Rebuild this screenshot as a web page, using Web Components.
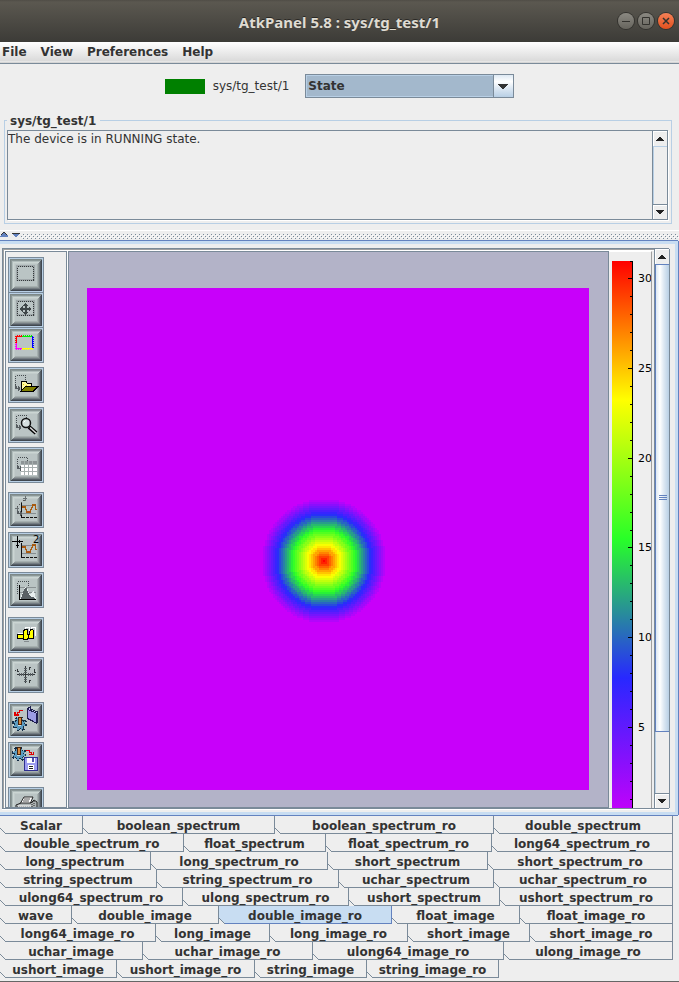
<!DOCTYPE html>
<html lang="en">
<head>
<meta charset="utf-8">
<title>AtkPanel 5.8 : sys/tg_test/1</title>
<style>
html, body { margin: 0; height: 100%; background: #eee; }
body {
  --line: #7a8a99; --focus: #6382bf; --pale: #b8cfe5; --tab: #c8ddf2; --ink: #333;
  font: 12px/16px "DejaVu Sans", sans-serif; color: var(--ink);
}
</style>
</head>
<body>
<atk-panel></atk-panel>
<script>
const define = (name, html, setup) => {
  const template = document.createElement('template');
  template.innerHTML = html;
  customElements.define(name, class extends HTMLElement {
    constructor() {
      super();
      this.attachShadow({ mode: 'open' }).append(template.content.cloneNode(true));
    }
    connectedCallback() {
      if (setup && !this.ready) { this.ready = true; setup(this.shadowRoot, this); }
    }
  });
};

define('title-bar', `
<style>
:host { display: grid; grid-template-columns: 1fr auto 1fr; align-items: center; height: 42px; box-sizing: border-box;
  background: linear-gradient(#504d46, #5b5850 2px, #3c3b37); color: #dfdbd2; }
h1 { grid-column: 2; margin: 0; padding-top: 2px; font: 700 15px/20px "Noto Sans", "Open Sans", sans-serif; text-shadow: 0 -1px #2a2926; }
div { display: flex; justify-content: flex-end; gap: 4px; padding-right: 5px; }
button { width: 16px; height: 16px; padding: 0; border: 0; border-radius: 50%; background: linear-gradient(#8b8982, #66645d); box-shadow: 0 0 0 1px #33322e; display: grid; }
button:last-child { background: linear-gradient(#f58157, #e2501d); }
svg { width: 16px; height: 16px; fill: none; stroke: #33322e; }
</style>
<h1><slot></slot></h1>
<div>
<button aria-label="Minimize"><svg viewBox="0 0 16 16"><path d="M4 8.500h8"/></svg></button>
<button aria-label="Maximize"><svg viewBox="0 0 16 16"><path d="M4.500 4.500h7v7h-7z"/></svg></button>
<button aria-label="Close"><svg viewBox="0 0 16 16"><path d="M5 5l6 6M11 5l-6 6" stroke-width="1.500"/></svg></button>
</div>`);

define('menu-bar', `
<style>
:host { display: flex; gap: 14px; padding: 0 2px; height: 22px; box-sizing: border-box; border-bottom: 1px solid var(--line);
  background: linear-gradient(#fff, #dadada 19px, #eee 19px, #ccc); }
button { border: 0; padding: 0; background: none; color: inherit; font: bold 12px/20px "DejaVu Sans", sans-serif; height: 20px; }
</style>
<button>File</button><button>View</button><button>Preferences</button><button>Help</button>`);

define('state-row', `
<style>
:host { display: flex; justify-content: center; align-items: center; height: 44px; }
i { width: 40px; height: 15px; background: #008000; margin-right: 8px; }
label { margin-right: 16px; }
span { display: grid; grid-template-columns: 1fr 20px; width: 209px; height: 24px; box-sizing: border-box; border: 1px solid var(--line); }
select { grid-area: 1 / 1 / 2 / 3; appearance: none; border: 0; border-radius: 0; margin: 0; padding: 0 2px; color: inherit; font: bold 12px/16px "DejaVu Sans", sans-serif;
  background: #a3b8cc; box-shadow: inset 0 0 0 1px var(--pale); }
svg { grid-area: 1 / 2; z-index: 1; pointer-events: none; width: 100%; height: 100%; box-sizing: border-box; border-left: 1px solid var(--line);
  background: linear-gradient(#dde8f3, #fff 30%, #dde8f3 60%, #b8cfe5); }
</style>
<i></i><label for="s">sys/tg_test/1</label>
<span><select id="s"><option>State</option><option>Status</option></select>
<svg viewBox="0 0 19 22" shape-rendering="crispEdges"><path d="M4 9h10v1h-1v1h-1v1h-1v1h-1v1h-2v-1h-1v-1h-1v-1h-1v-1h-1z" fill="#333"/></svg></span>`);

define('scroll-bar', `
<style>
:host { display: flex; flex-direction: column; width: 16px; box-sizing: border-box; border-left: 1px solid var(--line); border-right: 1px solid var(--line); }
button { flex: none; height: 15px; padding: 0; border: 0; background: #eee; box-shadow: inset 1px 1px #fff; display: grid; place-items: center; }
button:first-child { border-bottom: 1px solid var(--line); }
button:last-child { border-top: 1px solid var(--line); }
button svg { width: 8px; height: 4px; }
.track { flex: 1; display: flex; flex-direction: column; box-shadow: inset 1px 1px var(--pale); }
.thumb { display: none; box-sizing: border-box; flex: 0 0 88.500%; border: 1px solid var(--focus); border-right: 0;
  background: linear-gradient(90deg, #dde8f3, #fff 30%, #dde8f3 60%, #b8cfe5); place-items: center; }
:host([thumb]) .thumb { display: grid; }
</style>
<button aria-label="Scroll up"><svg viewBox="0 0 8 4" shape-rendering="crispEdges"><path d="M3 0h2v1h1v1h1v1h1v1h-8v-1h1v-1h1v-1h1z" fill="#222"/></svg></button>
<div class="track"><div class="thumb"><svg width="8" height="6" shape-rendering="crispEdges"><path d="M0 .5h8M0 2.500h8M0 4.500h8" stroke="#6382bf"/></svg></div></div>
<button aria-label="Scroll down"><svg viewBox="0 0 8 4" shape-rendering="crispEdges"><path d="M0 0h8v1h-1v1h-1v1h-1v1h-2v-1h-1v-1h-1v-1h-1z" fill="#222"/></svg></button>`);

define('status-box', `
<style>
:host { display: block; padding: 4px 7px 0 4px; }
fieldset { margin: 0; min-width: 0; border: 1px solid var(--pale); padding: 2px 3px 3px 2px; }
legend { font-weight: bold; line-height: 18px; height: 16px; padding: 0 4px 0 3px; }
div { display: flex; box-sizing: border-box; height: 90px; border: 1px solid var(--line); border-right: 0; box-shadow: 1px 1px #fff; }
textarea { flex: 1; min-width: 0; resize: none; border: 0; padding: 0; margin: 0; background: #eee; color: inherit; font: 12px/16px "DejaVu Sans", sans-serif; outline: 0; overflow: hidden; }
</style>
<fieldset><legend>sys/tg_test/1</legend><div><textarea readonly aria-label="Status">The device is in RUNNING state.</textarea><scroll-bar></scroll-bar></div></fieldset>`);

define('split-divider', `
<style>
:host { display: block; padding: 6px 0 0; }
svg { display: block; width: 100%; height: 9px; border-top: 1px solid #fff; box-sizing: border-box; }
</style>
<svg shape-rendering="crispEdges"><defs><pattern id="d" width="4" height="4" patternUnits="userSpaceOnUse"><path d="M0 0h1v1h-1zM2 2h1v1h-1z" fill="#fff"/><path d="M1 1h1v1h-1zM3 3h1v1h-1z" fill="#7a8a99"/></pattern></defs>
<rect x="0" y="3" width="100%" height="5" fill="url(#d)"/>
<path d="M0 2h21v6h-21z" fill="#eee"/><path d="M0 6V5L4 1L8 5V6z" fill="#6382bf"/><path d="M1 4L4 1L7 4" stroke="#333" fill="none"/><path d="M12 2h8v1l-4 3l-4-3z" fill="#6382bf"/><path d="M12 2.500h8" stroke="#333"/></svg>`);

const marquee = (x, y, w, h) => `<path d="M${x} ${y + h}V${y}H${x + w}V${y + h * .6}" fill="none" stroke="#444b4e" stroke-dasharray="1 1"/>`;
const arrow = (x, y) => `<path d="M${x - 3} ${y - 4}v3h3M${x - 2} ${y - 3}v2h3M${x} ${y - 3}v5M${x + 1} ${y - 2}v3" fill="none" stroke="#565d60"/>`;
const box = `<rect x="7" y="7" width="17" height="14" fill="none" stroke="#a0a8aa" stroke-width="2"/><rect x="7.500" y="7.500" width="16" height="14" fill="none" stroke="#33383a" stroke-width="1" stroke-dasharray="1 1"/>`;
const chart = `<path d="M11.500 9v15" stroke="#111"/><path d="M12 11.500h14M12 19.500h14" stroke="#858c8f"/><path d="M12 23.500h15" stroke="#111" stroke-dasharray="3 1"/><path d="M12 13h3l2 5h3l3-7h2l1 5" fill="none" stroke="#a85a10" stroke-width="1.500"/>`;
const gear = (x, y) => `<g transform="translate(${x} ${y})"><circle r="5" fill="#5c9cc0" stroke="#142c44" stroke-width="1"/><circle r="6" fill="none" stroke="#142c44" stroke-width="3" stroke-dasharray="2 2.700"/><circle r="5" fill="none" stroke="#5c9cc0" stroke-width="2" stroke-dasharray="2 2"/><circle r="2" fill="#c8dce4"/><path d="M-1.500-7h3v7h-3z" fill="#d88a40" stroke="#4c2408"/></g>`;
const icons = {
  Select: box,
  Move: box + `<path d="M15.500 9l3 3h-2v2h2v-2l3 3-3 3v-2h-2v2h2l-3 3-3-3h2v-2h-2v2l-3-3 3-3v2h2v-2h-2z" fill="#3f4648"/>`,
  'Selection colour': `<g fill="none" stroke-width="2"><path d="M6 7h6M6 7v7" stroke="#f00"/><path d="M12 7h11" stroke="#0e0"/><path d="M23 7v14" stroke="#00f"/><path d="M12 20h11" stroke="#ff0"/><path d="M6 14v6h6" stroke="#f0f"/></g><rect x="5.500" y="6.500" width="18" height="14" fill="none" stroke="#b9c3c3" stroke-dasharray="1 1"/>`,
  Open: marquee(5.500, 6.500, 10, 9) + arrow(8, 20) + `<path d="M11 22V14l1-2h4l1 2h4v4" fill="#fff9a0" stroke="#000"/><path d="M13 15h1M16 16h1M14 18h1M13 20h1" stroke="#e0c800"/><path d="M10.500 22.500l5-5H28l-5 5z" fill="#808000" stroke="#000"/>`,
  Zoom: marquee(6.500, 6.500, 10, 11) + arrow(9, 19) + `<g shape-rendering="auto"><path d="M19 18l7 6" stroke="#000" stroke-width="4"/><path d="M20 18.500l6 5.500" stroke="#ddd" stroke-width="1.500"/><circle cx="16" cy="14" r="4.500" fill="#d4dede" stroke="#111" stroke-width="1.500"/><path d="M13.500 13.500l2-2" stroke="#fff"/></g>`,
  Table: marquee(7.500, 8.500, 10, 10) + arrow(10, 20) + `<path d="M11 12h16v14H11z" fill="#fff"/><path d="M11 12h16v3H11z" fill="#8d9496"/><path d="M11 15.500h16M11 18.500h16M11 22.500h16M14.500 12v14M18.500 12v14M22.500 12v14" stroke="#a8b0b0"/>`,
  'Line profile': `<path d="M13 4.500h4M15.500 2v5M5 14.500h4M7.500 12v5" stroke="#6a7173"/><path d="M14 6L8 13" stroke="#555" stroke-width="1.500" stroke-dasharray="1 2"/>` + chart + arrow(10, 20),
  'Cross profile': `<path d="M2 7.500h11M7.500 2v12" stroke="#000"/><path d="M6 11.500h3M9.500 6v3" stroke="#000"/><text x="23" y="9" font-size="10" font-family="DejaVu Sans, sans-serif">2</text>` + chart,
  Histogram: marquee(7.500, 7.500, 11, 12) + `<path d="M10 13.500h16M10 18.500h16" stroke="#8a9193"/><path d="M10 25l5-12 2 1 3 7 2-3 2-1 2 8z" fill="#e8eeee"/><path d="M11 25l3-9 2-3 3 7 2 3h2l2 2z" fill="#596064"/><path d="M9.500 11v14.500H26" stroke="#000" fill="none"/>`,
  Settings: `<path d="M8 14h6l2-6h3v5h2l1-5h3v9" fill="none" stroke="#fff"/><path d="M7.500 15.500h6V12l2-2h2v5h2l1-5h2l1 2v7.500h-6v1h-4v-1h-6z" fill="#ff0" stroke="#000"/><path d="M13.500 15v4M18.500 15v4" stroke="#000"/><path d="M14 22.500h5" stroke="#858c8f"/>`,
  Axes: `<path d="M7 15.500h18M15.500 7v17" stroke="#33383a"/><path d="M9 14v3M11 14v3M13 14v3M18 14v3M20 14v3M22 14v3M14 9h3M14 11h3M14 13h3M14 18h3M14 20h3M14 22h3" stroke="#596064"/><path d="M5 11h1M7 10v2h2M19 11V8h2M19 24v-3h2M24 10v3h2" stroke="#33383a" fill="none"/>`,
  'Load settings': `<path d="M13 6.500H9.500v2h-2V11M5 8v3h4" fill="none" stroke="#e00000" stroke-width="1.500"/><path d="M17 5l3-2v2l8 3-1 11-9-4z" fill="#c4c4f4" stroke="#202050"/><path d="M17 5l9 4v10l-9-5z" fill="#9c9ce4" stroke="#202050"/>` + gear(9.500, 20),
  'Save settings': gear(9, 10) + `<path d="M16 6.500h3.500v2h2V11M18.500 10.500h5v-3" fill="none" stroke="#e00000" stroke-width="1.500"/><path d="M14.500 13.500h13v13h-13z" fill="#9c9cf0" stroke="#303090"/><path d="M17 14h8v5h-8zM18 21h6v5h-6z" fill="#fff"/><path d="M22 14h2v4h-2z" fill="#5050b0"/><path d="M19 22.500h4M19 24.500h4" stroke="#222"/>`,
  Print: `<g shape-rendering="auto"><path d="M10 15l4-7h9l-3 7z" fill="#fff" stroke="#222"/><path d="M14 10h6M13 12h6" stroke="#555"/><path d="M6 16l5-2h10l3-3 3 2v7l-4 5H8l-2-4z" fill="#aeb4b4" stroke="#222"/><path d="M7 18h14M22 13v7M24 12v7" stroke="#222" stroke-dasharray="1 1"/><path d="M8 17h13" stroke="#fff"/></g>`
};
const bevel = [['#7d8888', '#40474f'], ['#8b9797', '#565e66'], ['#b0bcbb', '#757d83'], ['#cbd5d3', '#8f9899'], ['#c2cccb', '#a5afaf']]
  .map(([light, dark], i) => `<path d="M${i} ${i}H${32 - i}V${32 - i}H${i}z" fill="${dark}"/><path d="M${i} ${i}H${32 - i}L${i} ${32 - i}z" fill="${light}"/>`).join('');

define('tool-button', `
<style>
:host { display: block; flex: none; }
button { display: block; width: 36px; height: 36px; box-sizing: border-box; padding: 0; border: 1px solid var(--line); background: var(--pale); }
svg { display: block; width: 32px; height: 32px; margin: 1px; }
</style><button></button>`, (root, host) => {
  const name = host.getAttribute('name');
  const button = root.querySelector('button');
  button.setAttribute('aria-label', name);
  button.innerHTML = `<svg viewBox="0 0 32 32" shape-rendering="crispEdges">${bevel}<path d="M5 5h22v22H5z" fill="#bac4c4"/>${icons[name]}</svg>`;
});

define('tool-strip', `
<style>
:host { display: flex; flex-direction: column; gap: 4px; padding: 5px 0 0 2px; box-sizing: border-box; overflow: hidden;
  border: 1px solid var(--line); box-shadow: 1px 0 #fff; }
.joined { margin-top: -5px; }
.group { margin-top: 5px; }
</style>
<tool-button name="Select"></tool-button>
<tool-button class="joined" name="Move"></tool-button>
<tool-button class="joined" name="Selection colour"></tool-button>
<tool-button name="Open"></tool-button>
<tool-button name="Zoom"></tool-button>
<tool-button name="Table"></tool-button>
<tool-button class="group" name="Line profile"></tool-button>
<tool-button name="Cross profile"></tool-button>
<tool-button name="Histogram"></tool-button>
<tool-button class="group" name="Settings"></tool-button>
<tool-button name="Axes"></tool-button>
<tool-button class="group" name="Load settings"></tool-button>
<tool-button name="Save settings"></tool-button>
<tool-button class="group" name="Print"></tool-button>`);

const stops = [[200, 0, 250], [40, 40, 255], [40, 255, 40], [255, 255, 0], [255, 0, 0]];
const MAX = 31;
const rainbow = v => {
  const t = v / MAX * 4, i = Math.min(3, Math.floor(t)), f = t - i;
  return stops[i].map((c, k) => Math.round(c + (stops[i + 1][k] - c) * f));
};

define('image-view', `
<style>
:host { display: block; overflow: hidden; background: #b3b3c8; border: 1px solid var(--line); padding: 36px 18px 0; min-width: 0; }
canvas { display: block; width: 502px; height: 502px; image-rendering: pixelated; }
</style><canvas width="251" height="251" role="img" aria-label="double_image_ro"></canvas>`, root => {
  const ctx = root.querySelector('canvas').getContext('2d');
  const img = ctx.createImageData(251, 251);
  for (let y = 0; y < 251; y++) for (let x = 0; x < 251; x++) {
    const v = Math.max(0, MAX - Math.floor(Math.hypot(x - 118, y - 136)));
    img.data.set([...rainbow(v), 255], (y * 251 + x) * 4);
  }
  ctx.putImageData(img, 0, 0);
});

define('colour-scale', `
<style>
:host { display: block; overflow: hidden; padding-top: 9px; padding-left: 3px; box-sizing: border-box; border-top: 1px solid #fff; border-right: 1px solid #a0a0a0; }
svg { display: block; width: 40px; height: 580px; }
text { font: 11px "DejaVu Sans", sans-serif; fill: #000; }
</style><svg viewBox="0 0 40 580"><defs><linearGradient id="g" x1="0" y1="0" x2="0" y2="1">
<stop offset="0" stop-color="#f00"/><stop offset=".25" stop-color="#ff0"/><stop offset=".5" stop-color="#28ff28"/><stop offset=".75" stop-color="#2828ff"/><stop offset="1" stop-color="#c800fa"/></linearGradient></defs>
<rect width="20" height="556" fill="url(#g)"/><path d="M20.500 0v556" stroke="#000"/></svg>`, root => {
  let s = '';
  for (let v = 0; v <= MAX; v++) {
    const y = Math.floor((MAX - v) * 556 / MAX) + .5, major = v % 5 === 0;
    s += `<path d="M${major ? 16 : 18} ${y}h${major ? 4 : 2}" stroke="#000"/>`;
    if (major && v) s += `<text x="26" y="${y + 3.500}">${v}</text>`;
  }
  root.querySelector('svg').insertAdjacentHTML('beforeend', s);
});

define('image-pane', `
<style>
:host { flex: 1; min-height: 0; display: grid; grid-template-rows: minmax(0, 1fr); box-sizing: border-box; padding: 4px 6px 3px 2px;
  border: solid var(--tab); border-width: 3px 3px 3px 0; box-shadow: 0 -1px var(--focus), 1px 0 var(--focus), 0 1px var(--focus); margin: 2px 1px 1px 0; }
div { display: grid; grid-template: minmax(0, 1fr) / 62px minmax(0, 1fr) 43px 17px; border: 1px solid var(--line); border-right: 0;
  box-shadow: inset 1px 1px #a0a0a0, inset 2px 2px #fff, 0 1px #fff; padding: 2px 0 0 2px; min-height: 0; }
image-view { margin: 0 0 0 1px; }
scroll-bar { margin: -2px 0 0 2px; width: 16px; }
</style>
<div><tool-strip></tool-strip><image-view></image-view><colour-scale></colour-scale><scroll-bar thumb></scroll-bar></div>`);

define('tab-item', `
<style>
:host { display: flex; min-width: 0; }
button { flex: 1; min-width: 0; display: grid; position: relative; height: 18px; padding: 0; border: 0; border-right: 1px solid var(--edge, var(--line));
  background: linear-gradient(var(--edge, var(--line)) 0 0) 5px 100% / 100% 1px no-repeat; color: inherit; font: bold 12px/20px "DejaVu Sans", sans-serif; white-space: nowrap; place-content: start center; }
svg { position: absolute; left: 0; bottom: 0; width: 6px; height: 6px; }
polygon { fill: none; }
:host([selected]) { --edge: var(--focus); }
:host([selected]) button { background: linear-gradient(var(--focus) 0 0) 5px 100% / 100% 1px no-repeat, linear-gradient(var(--tab) 0 0); }
:host([selected]) polygon { fill: #eee; }
</style><button role="tab"><slot></slot><svg viewBox="0 0 6 6" shape-rendering="crispEdges"><polygon points="0,0 6,6 0,6"/><path d="M0 0l6 6" stroke="#7a8a99"/></svg></button>`);

const rows = [
  [672, 'Scalar', 82, 'boolean_spectrum', 274, 'boolean_spectrum_ro', 493, 'double_spectrum', 672],
  [672, 'double_spectrum_ro', 183, 'float_spectrum', 325, 'float_spectrum_ro', 491, 'long64_spectrum_ro', 672],
  [672, 'long_spectrum', 150, 'long_spectrum_ro', 327, 'short_spectrum', 487, 'short_spectrum_ro', 672],
  [672, 'string_spectrum', 156, 'string_spectrum_ro', 338, 'uchar_spectrum', 493, 'uchar_spectrum_ro', 672],
  [672, 'ulong64_spectrum_ro', 182, 'ulong_spectrum_ro', 348, 'ushort_spectrum', 499, 'ushort_spectrum_ro', 672],
  [672, 'wave', 71, 'double_image', 218, 'double_image_ro', 391, 'float_image', 519, 'float_image_ro', 672],
  [672, 'long64_image_ro', 155, 'long_image', 269, 'long_image_ro', 407, 'short_image', 529, 'short_image_ro', 672],
  [672, 'uchar_image', 142, 'uchar_image_ro', 312, 'ulong64_image_ro', 503, 'ulong_image_ro', 672],
  [672, 'ushort_image', 116, 'ushort_image_ro', 254, 'string_image', 366, 'string_image_ro', 498]
];
define('tab-rows', `
<style>
:host { display: block; padding: 0 6px 3px 0; border-bottom: 1px solid #666; }
.row { display: grid; }
</style>`, root => {
  for (const [total, ...cells] of rows) {
    const row = document.createElement('div');
    row.className = 'row';
    row.setAttribute('role', 'tablist');
    let start = -1, cols = [];
    for (let i = 0; i < cells.length; i += 2) {
      const tab = document.createElement('tab-item');
      tab.textContent = cells[i];
      if (cells[i] === 'double_image_ro') tab.setAttribute('selected', '');
      cols.push(`minmax(0, ${cells[i + 1] - start}fr)`);
      start = cells[i + 1];
      row.append(tab);
    }
    if (start < total) cols.push(`${total - start}fr`);
    row.style.gridTemplateColumns = cols.join(' ');
    root.append(row);
  }
});

define('atk-panel', `
<style>
:host { display: flex; flex-direction: column; height: 100vh; overflow: hidden; }
title-bar, menu-bar, state-row, status-box, split-divider, tab-rows { flex: none; }
</style>
<title-bar>AtkPanel 5.8 : sys/tg_test/1</title-bar>
<menu-bar></menu-bar>
<state-row></state-row>
<status-box></status-box>
<split-divider></split-divider>
<image-pane></image-pane>
<tab-rows></tab-rows>`);
</script>
</body>
</html>
